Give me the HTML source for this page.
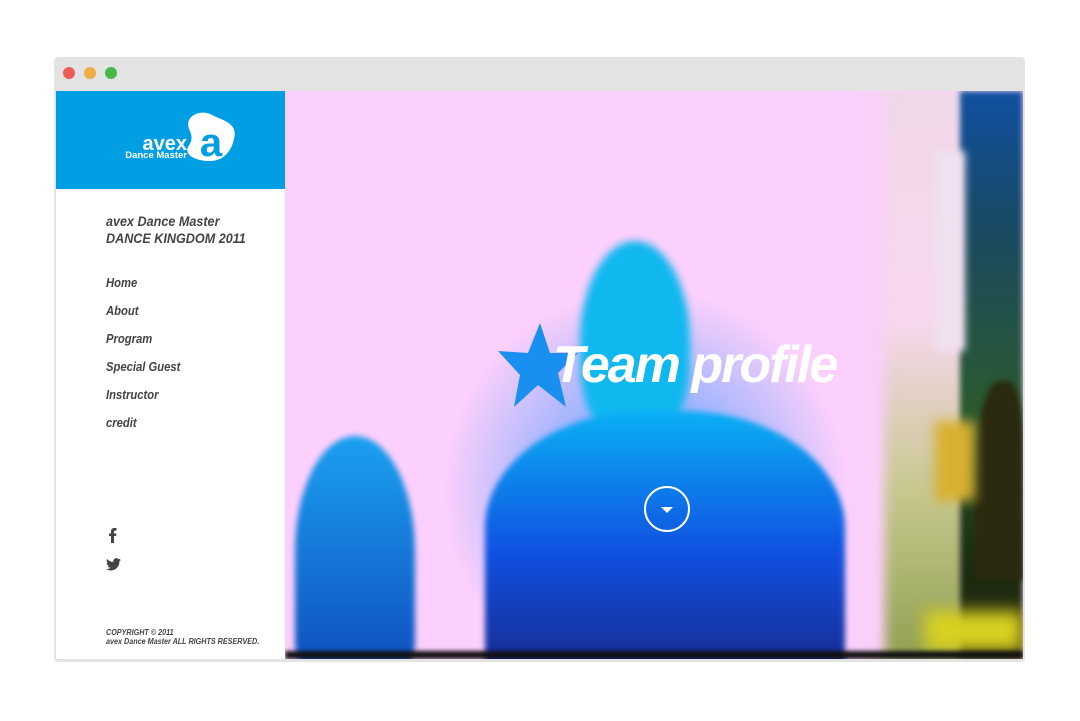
<!DOCTYPE html>
<html><head><meta charset="utf-8"><style>
*{margin:0;padding:0;box-sizing:border-box}
body{width:1080px;height:721px;background:#fff;position:relative;overflow:hidden;font-family:"Liberation Sans",sans-serif}
.frame{position:absolute;left:54px;top:57px;width:971px;height:605px;background:#e3e3e3;border-radius:4px}
.dot{position:absolute;top:10px;width:12px;height:12px;border-radius:50%}
.side{position:absolute;left:56px;top:91px;width:229px;height:568px;background:#fff}
.logo{position:absolute;left:0;top:0;width:229px;height:98px;background:#009fe3}
.t{position:absolute;left:50px;color:#444;font-weight:bold;font-style:italic;transform-origin:0 0;transform:scaleX(0.9);white-space:nowrap}
.photo{position:absolute;left:285px;top:91px;width:738px;height:568px;overflow:hidden;background:#fcd0fc}
.b{position:absolute}
</style></head><body>
<div class="frame">
<div class="dot" style="left:9px;background:#ee5c55"></div>
<div class="dot" style="left:30px;background:#eeae45"></div>
<div class="dot" style="left:51px;background:#48b848"></div>
</div>
<div class="side">
<div class="logo">
<svg width="229" height="98" viewBox="0 0 229 98">
<path d="M133 38 C128 24 146 18 156 24 C168 30 182 32 178 48 C175 62 166 70 154 70 C140 70 128 64 132 56 C136 50 137 46 133 38Z" fill="#fff"/>
<text x="155" y="65" font-family="Liberation Sans" font-weight="bold" font-size="40" fill="#009fe3" text-anchor="middle">a</text>
<text x="131" y="59" font-family="Liberation Sans" font-weight="bold" font-size="20" fill="#fff" text-anchor="end">avex</text>
<text x="131" y="67" font-family="Liberation Sans" font-weight="bold" font-size="9.5" fill="#fff" text-anchor="end">Dance Master</text>
</svg>
</div>
<div class="t" style="top:122px;font-size:14px;line-height:17px">avex Dance Master<br>DANCE KINGDOM 2011</div>
<div class="t" style="top:185px;font-size:12.5px">Home</div>
<div class="t" style="top:213px;font-size:12.5px">About</div>
<div class="t" style="top:241px;font-size:12.5px">Program</div>
<div class="t" style="top:269px;font-size:12.5px">Special Guest</div>
<div class="t" style="top:297px;font-size:12.5px">Instructor</div>
<div class="t" style="top:325px;font-size:12.5px">credit</div>
<svg style="position:absolute;left:52px;top:436px" width="10" height="16" viewBox="0 0 10 16"><path d="M3 16V9H1V6.5h2V4.5C3 2 4.3 1 6.5 1H8.5V3.6H7.2C6.3 3.6 6 4 6 4.8V6.5h2.5L8.1 9H6v7Z" fill="#444"/></svg>
<svg style="position:absolute;left:50px;top:467px" width="15" height="13" viewBox="0 0 24 20"><path d="M24 2.4a9.8 9.8 0 0 1-2.8.8A4.9 4.9 0 0 0 23.3.4a9.9 9.9 0 0 1-3.1 1.2A4.9 4.9 0 0 0 11.8 6 14 14 0 0 1 1.7.9a4.9 4.9 0 0 0 1.5 6.6A4.9 4.9 0 0 1 1 6.9a4.9 4.9 0 0 0 3.9 4.8 4.9 4.9 0 0 1-2.2.1 4.9 4.9 0 0 0 4.6 3.4A9.9 9.9 0 0 1 0 17.3 14 14 0 0 0 7.5 19.5c9.1 0 14-7.5 14-14v-.6A10 10 0 0 0 24 2.4z" fill="#444"/></svg>
<div class="t" style="top:537px;font-size:8px;line-height:9px">COPYRIGHT © 2011<br>avex Dance Master ALL RIGHTS RESERVED.</div>
</div>
<div class="photo">
<div class="b" style="left:590px;top:0;width:90px;height:568px;background:linear-gradient(180deg,#f0d8e8,#f8d8f0 40%,#c8c890 70%,#90a050);filter:blur(4px)"></div>
<div class="b" style="left:675px;top:0;width:63px;height:568px;background:linear-gradient(180deg,#1050a0,#1a4a60 25%,#2a5a30 55%,#1a2a10 85%,#303010);filter:blur(3px)"></div>
<div class="b" style="left:650px;top:60px;width:30px;height:200px;background:#f0e0f0;filter:blur(4px)"></div>
<div class="b" style="left:690px;top:290px;width:48px;height:200px;border-radius:50% 30% 0 0;background:#2a2a10;filter:blur(3px)"></div>
<div class="b" style="left:650px;top:330px;width:40px;height:80px;background:#d8b030;filter:blur(6px)"></div>
<div class="b" style="left:640px;top:520px;width:98px;height:40px;background:#d8d020;filter:blur(8px)"></div>
<div class="b" style="left:570px;top:0;width:30px;height:568px;background:#f8d0f8;filter:blur(6px)"></div>
<div class="b" style="left:150px;top:200px;width:420px;height:400px;border-radius:50%;background:radial-gradient(circle,rgba(30,140,255,.8),rgba(30,120,255,0) 70%)"></div>
<div class="b" style="left:295px;top:150px;width:110px;height:200px;border-radius:50% 50% 40% 40%;background:#10b8f0;filter:blur(4px)"></div>
<div class="b" style="left:200px;top:320px;width:360px;height:260px;border-radius:45% 45% 0 0;background:linear-gradient(180deg,#0ab0f5,#1050e0 55%,#182a90);filter:blur(3px)"></div>
<div class="b" style="left:10px;top:345px;width:120px;height:230px;border-radius:50% 50% 10% 10%;background:linear-gradient(180deg,#1aa0f0,#1050c0);filter:blur(3px)"></div>
<div class="b" style="left:0;top:560px;width:738px;height:8px;background:#111;filter:blur(2px)"></div>
<svg style="position:absolute;left:213px;top:232px" width="80" height="86" viewBox="0 0 80 86"><path d="M42 0 L52 30 L80 30 L60 50 L68 84 L40 62 L16 84 L22 52 L0 28 L30 30Z" fill="#1990f0"/></svg>
<div class="b" style="left:268px;top:244px;color:#fff;font-size:52px;font-weight:bold;font-style:italic;letter-spacing:-2px;white-space:nowrap">Team profile</div>
<div class="b" style="left:359px;top:395px;width:46px;height:46px;border:2px solid #fff;border-radius:50%"></div>
<div class="b" style="left:376px;top:416px;width:0;height:0;border-left:6px solid transparent;border-right:6px solid transparent;border-top:6px solid #fff"></div>
</div>
</body></html>
